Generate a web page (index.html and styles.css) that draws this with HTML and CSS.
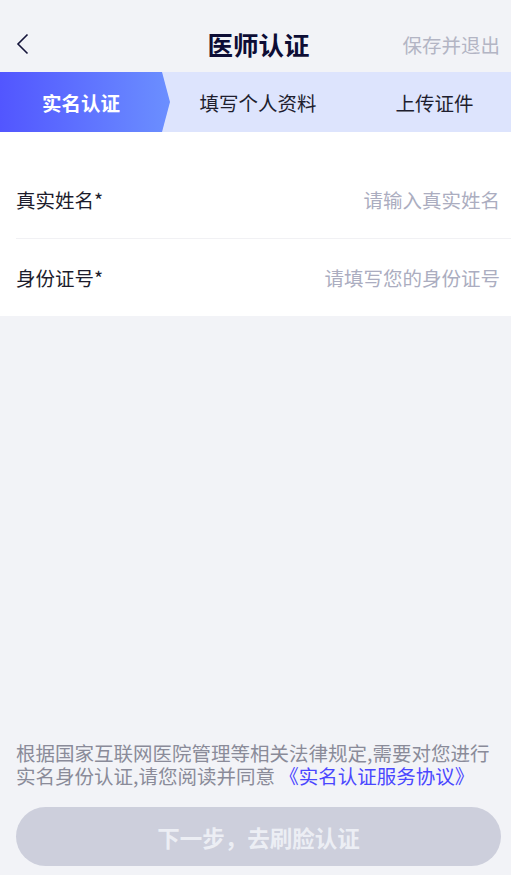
FILE: index.html
```html
<!DOCTYPE html>
<html lang="zh-CN">
<head>
    <meta charset="UTF-8">
    <meta name="viewport" content="width=device-width, initial-scale=1.0">
    <title>医师认证</title>
    <link rel="stylesheet" href="styles.css">
</head>
<body>
    <div class="page">
        <header class="nav">
            <span class="back">
                <svg width="14" height="22" viewBox="0 0 14 22"><path d="M11.5 1.5 L2 11 L11.5 20.5" fill="none" stroke="#14143a" stroke-width="1.6"/></svg>
            </span>
            <h1 class="title">医师认证</h1>
            <span class="save">保存并退出</span>
        </header>

        <div class="steps">
            <div class="step active">实名认证</div>
            <div class="step middle">填写个人资料</div>
            <div class="step last">上传证件</div>
        </div>

        <div class="form">
            <div class="row">
                <span class="label">真实姓名*</span>
                <input type="text" placeholder="请输入真实姓名">
            </div>
            <div class="row">
                <span class="label">身份证号*</span>
                <input type="text" placeholder="请填写您的身份证号">
            </div>
        </div>

        <div class="spacer"></div>

        <div class="footer">
            <p class="notice">根据国家互联网医院管理等相关法律规定,需要对您进行实名身份认证,请您阅读并同意 <a href="#">《实名认证服务协议》</a></p>
            <button class="next" disabled>下一步，去刷脸认证</button>
        </div>
    </div>
</body>
</html>
```

FILE: styles.css
```css
* {
    box-sizing: border-box;
}
body {
    margin: 0;
    font-family: "Noto Sans CJK SC", "Noto Sans", sans-serif;
    background: #f2f3f7;
    color: #1c1c2c;
}
.page {
    display: flex;
    flex-direction: column;
    min-height: 100vh;
}
.nav {
    height: 72px;
    display: flex;
    align-items: center;
    justify-content: space-between;
    padding: 16px 11px 0 16px;
    position: relative;
}
.back {
    display: flex;
    align-items: center;
}
.title {
    position: absolute;
    left: 6px;
    right: 0;
    top: 14px;
    bottom: 0;
    display: flex;
    align-items: center;
    justify-content: center;
    margin: 0;
    font-size: 25.5px;
    font-weight: 700;
    color: #0d0d35;
    pointer-events: none;
}
.save {
    font-size: 19.5px;
    color: #b3b5c4;
}
.steps {
    height: 60px;
    display: flex;
    background: #dde4fd;
}
.step {
    display: flex;
    align-items: center;
    justify-content: center;
    font-size: 19.5px;
    color: #1e1e2e;
}
.step.active {
    flex: 0 0 170px;
    padding-right: 8px;
    color: #fff;
    font-weight: 700;
    background: linear-gradient(90deg, #5256ff, #6b8fff);
    clip-path: polygon(0 0, 162px 0, 170px 50%, 162px 100%, 0 100%);
}
.step.middle {
    flex: 0 0 176px;
}
.step.last {
    flex: 1;
    padding-left: 12px;
}
.form {
    background: #fff;
    padding: 29px 0 0 16px;
}
.row {
    height: 78px;
    display: flex;
    align-items: center;
    justify-content: space-between;
    padding-right: 11px;
    border-bottom: 1px solid #f1f1f4;
}
.row:last-child {
    height: 77px;
    border-bottom: none;
}
.label {
    font-size: 19.5px;
    white-space: nowrap;
}
.row input {
    border: none;
    outline: none;
    text-align: right;
    font-family: inherit;
    font-size: 19.5px;
    width: 270px;
    padding: 0;
    color: #1c1c2c;
}
.row input::placeholder {
    color: #abadc0;
}
.spacer {
    flex: 1;
}
.footer {
    padding: 0 10px 9px 16px;
}
.notice {
    margin: 0 0 20px;
    font-size: 19.5px;
    line-height: 23px;
    color: #8a8b99;
}
.notice a {
    display: inline-block;
    color: #4a47ff;
    text-decoration: none;
}
.next {
    width: 485px;
    height: 59px;
    border: none;
    border-radius: 30px;
    background: #cdcfdc;
    color: #eceef4;
    font-family: inherit;
    font-size: 22.5px;
    font-weight: 700;
}
```
